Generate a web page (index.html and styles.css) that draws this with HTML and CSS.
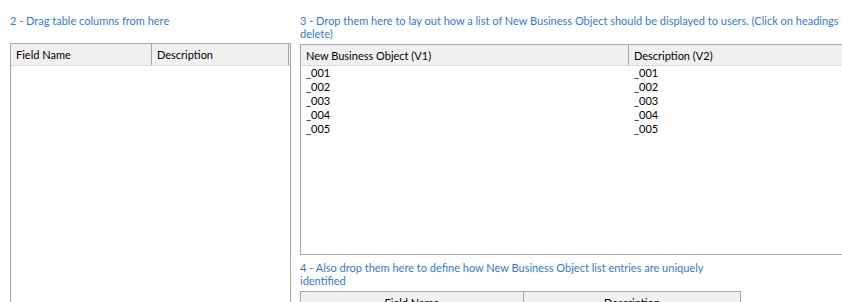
FILE: index.html
```html
<!DOCTYPE html>
<html>
<head>
<meta charset="utf-8">
<link rel="stylesheet" href="styles.css">
</head>
<body>
<div class="page">
  <section class="left">
    <div class="label single">2 - Drag table columns from here</div>
    <div class="grid source">
      <div class="head">
        <div class="hcell c1">Field Name</div>
        <div class="hcell c2">Description</div>
      </div>
    </div>
  </section>
  <section class="right">
    <div class="label wide">3 - Drop them here to lay out how a list of New Business Object should be displayed to users. (Click on headings to delete)</div>
    <div class="grid list">
      <div class="head">
        <div class="hcell l1">New Business Object (V1)</div>
        <div class="hcell l2">Description (V2)</div>
      </div>
      <div class="row"><span class="l1">_001</span><span class="l2">_001</span></div>
      <div class="row"><span class="l1">_002</span><span class="l2">_002</span></div>
      <div class="row"><span class="l1">_003</span><span class="l2">_003</span></div>
      <div class="row"><span class="l1">_004</span><span class="l2">_004</span></div>
      <div class="row"><span class="l1">_005</span><span class="l2">_005</span></div>
    </div>
    <div class="label narrow">4 - Also drop them here to define how New Business Object list entries are uniquely identified</div>
    <div class="grid keys">
      <div class="head">
        <div class="hcell k1">Field Name</div>
        <div class="hcell k2">Description</div>
      </div>
    </div>
  </section>
</div>
</body>
</html>
```

FILE: styles.css
```css
html, body {
  margin: 0;
  padding: 0;
  background: #ffffff;
  overflow: hidden;
}

body {
  width: 842px;
  height: 302px;
  font-family: Lato, "Noto Sans", sans-serif;
  font-size: 11px;
  color: #000;
}

.page {
  display: flex;
  gap: 9px;
  padding: 14px 0 0 10px;
}

.label {
  color: #2f7bd8;
  line-height: 13px;
}

.label.single {
  height: 29px;
}

.label.wide {
  width: 560px;
  height: 30px;
}

.label.narrow {
  width: 405px;
  margin: 6px 0 4px;
  height: 26px;
}

.left {
  width: 281px;
  flex: none;
}

.right {
  width: 600px;
  flex: none;
}

.grid {
  border: 1px solid #a7a7a7;
  background: #fff;
  box-sizing: border-box;
}

.head {
  display: flex;
  height: 22px;
  background: #f0f0f0;
  border-bottom: 1px solid #d9d9d9;
  box-sizing: border-box;
}

.hcell {
  line-height: 22px;
  padding-left: 5px;
  box-sizing: border-box;
  white-space: nowrap;
}

.source {
  width: 281px;
  height: 280px;
}

.source .c1 {
  width: 141px;
  border-right: 1px solid #a7a7a7;
}

.source .c2 {
  width: 137px;
  border-right: 1px solid #a7a7a7;
}

.list {
  height: 211px;
  width: 620px;
}

.list .head {
  height: 21px;
}

.list .head .hcell {
  line-height: 21px;
}

.list .l1 {
  width: 328px;
  flex: none;
}

.list .head .l1 {
  border-right: 1px solid #a7a7a7;
}

.row {
  display: flex;
  height: 14px;
  line-height: 14px;
}

.row span {
  padding-left: 5px;
  box-sizing: border-box;
}

.keys {
  width: 441px;
  height: 40px;
}

.keys .hcell {
  text-align: center;
  padding-left: 0;
}

.keys .k1 {
  width: 223px;
  border-right: 1px solid #a7a7a7;
}

.keys .k2 {
  width: 216px;
}
```
